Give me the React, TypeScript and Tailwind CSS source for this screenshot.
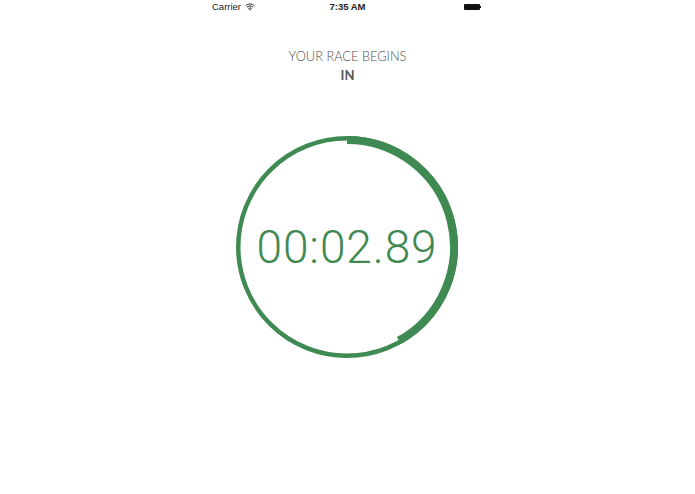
export default function App() {
  const cx = 111, cy = 111, r = 107;
  const a = (151 * Math.PI) / 180;
  const ex = cx + r * Math.sin(a), ey = cy - r * Math.cos(a);
  return (
    <div className="relative w-[695px] h-[494px] bg-white overflow-hidden flex flex-col items-center font-['Lato',sans-serif]">
      <div className="w-full h-[14px] relative flex items-center justify-center text-[9.5px] text-[#222] font-['Liberation_Sans',sans-serif]">
        <div className="absolute left-[212px] top-0 h-[14px] flex items-center gap-[4px]">
          <span>Carrier</span>
          <svg width="10" height="8" viewBox="0 0 10 8" fill="none" stroke="#222" strokeWidth="1">
            <path d="M0.5 2.8C3 0.4 7 0.4 9.5 2.8" />
            <path d="M2 4.2C3.8 2.6 6.2 2.6 8 4.2" />
            <path d="M3.4 5.6C4.4 4.8 5.6 4.8 6.6 5.6" />
            <path d="M5 7.8L4 6.6C4.6 6.2 5.4 6.2 6 6.6Z" fill="#222" stroke="none" />
          </svg>
        </div>
        <span className="font-bold">7:35 AM</span>
        <div className="absolute left-[464px] top-[4px] flex items-center">
          <div className="w-[16px] h-[6px] bg-[#111] rounded-[1px]" />
          <div className="w-[1px] h-[2px] bg-[#111]" />
        </div>
      </div>
      <div className="mt-[35px] text-[12.8px] leading-[14px] text-[#4f4f4f] font-light">YOUR RACE BEGINS</div>
      <div className="mt-[5px] text-[13px] leading-[14px] text-[#555] font-bold">IN</div>
      <div className="mt-[54px] mr-[1px] w-[222px] h-[222px] relative flex items-center justify-center">
        <svg className="absolute inset-0" width="222" height="222" viewBox="0 0 222 222" fill="none" stroke="#3f8952">
          <circle cx="111" cy="111" r="108.75" strokeWidth="4.5" />
          <path d={`M ${cx} ${cy - r} A ${r} ${r} 0 0 1 ${ex} ${ey}`} strokeWidth="8" />
        </svg>
        <span className="relative text-[46px] leading-none tracking-[0.9px] text-[#3f8952] font-['Roboto',sans-serif] font-light">00:02.89</span>
      </div>
    </div>
  );
}
